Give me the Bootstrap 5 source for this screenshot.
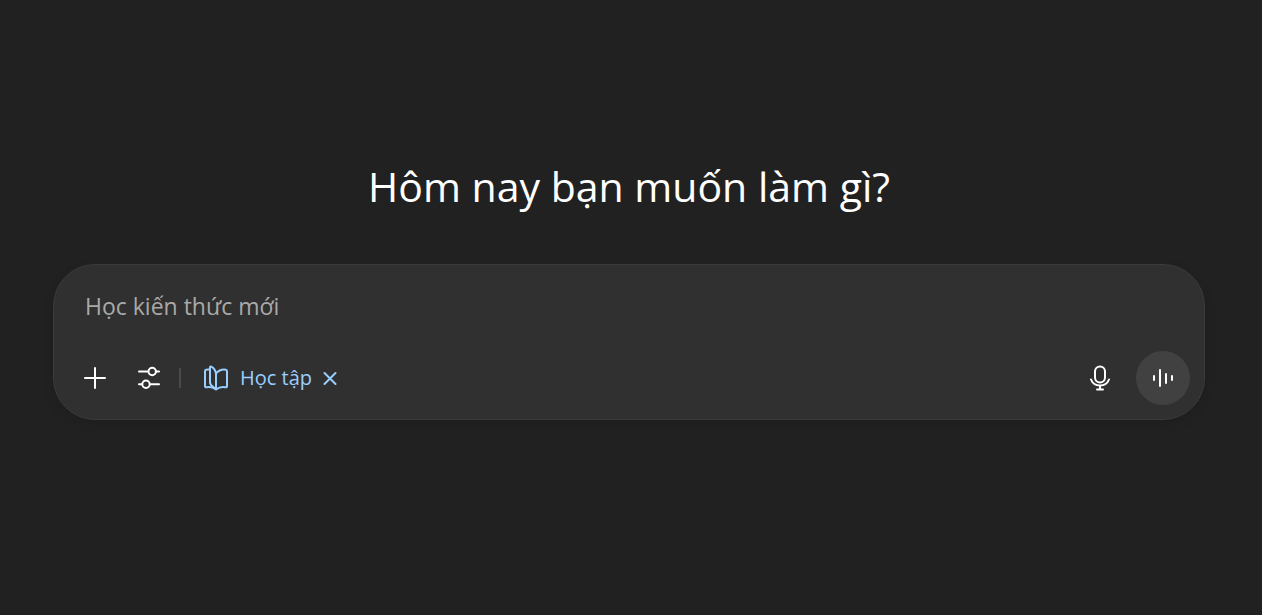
<!DOCTYPE html>
<html lang="vi">
<head>
<meta charset="utf-8">
<meta name="viewport" content="width=device-width, initial-scale=1">
<title>Hôm nay bạn muốn làm gì?</title>
<link href="https://cdn.jsdelivr.net/npm/bootstrap@5.3.0/dist/css/bootstrap.min.css" rel="stylesheet">
<style>
  body { background: #212121; color: #fff; font-family: "Open Sans", "Noto Sans", sans-serif; }
  .hero { padding: 152px 57px 32px 53px; }
  .hero-title { font-size: 41px; line-height: 68px; font-weight: 400; margin-bottom: 44px; }
  .composer { background: #303030; border: 1px solid #3b3b3b; border-radius: 42px; padding: 24px 14px 14px 23px; box-shadow: 0 4px 12px rgba(0, 0, 0, .1); }
  .prompt { font-size: 23px; line-height: 34px; height: 34px; padding: 0 8px; margin-bottom: 28px; color: #fff; background: none; }
  .prompt:focus { color: #fff; background: none; box-shadow: none; }
  .prompt::placeholder { color: #a9a9a9; opacity: 1; }
  .tool { width: 36px; height: 36px; color: #fff; }
  .tool-gap { gap: 18px; }
  .divider { width: 2px; height: 20px; background: #4a4a4a; margin: 0 18px 0 12px; }
  .study { color: #99ceff; font-size: 20px; line-height: 36px; }
  .study:hover, .tool:hover, .voice:hover { color: #fff; }
  .study-label { margin: 0 11px; }
  .voice { width: 54px; height: 54px; background: #414141; color: #fff; }
  .mic { margin-right: 18px; }
  svg { display: block; flex: none; fill: none; stroke: currentColor; stroke-width: 2; stroke-linecap: round; stroke-linejoin: round; }
</style>
</head>
<body>
<main class="hero">
  <h1 class="hero-title text-center">Hôm nay bạn muốn làm gì?</h1>
  <form class="composer">
    <input class="prompt form-control border-0" type="text" placeholder="Học kiến thức mới" aria-label="Học kiến thức mới">
    <div class="d-flex align-items-center">
      <div class="d-flex tool-gap">
        <button type="button" class="tool btn border-0 p-0 d-flex align-items-center justify-content-center" aria-label="Thêm">
          <svg width="24" height="24" viewBox="0 0 24 24"><path d="M12 2v20M2 12h20"/></svg>
        </button>
        <button type="button" class="tool btn border-0 p-0 d-flex align-items-center justify-content-center" aria-label="Công cụ">
          <svg width="24" height="24" viewBox="0 0 24 24"><path d="M2 5.500h9M19 5.500h3M2 18.200h3M13 18.200h9"/><circle cx="15.200" cy="5.500" r="3.700"/><circle cx="9" cy="18.200" r="3.700"/></svg>
        </button>
      </div>
      <div class="divider"></div>
      <button type="button" class="study btn border-0 p-0 d-flex align-items-center">
        <svg class="ms-1" width="26" height="26" viewBox="0 0 26 26"><path d="M13 8.500C12.500 5.500 11 3 8.200 1.600Q7 1.200 7 2.500V17.500C7 20.500 10 21.500 13 24.500ZM7 4.200 3.200 4.700Q2 5 2 6.200V21Q2 22.300 3.300 22.200C7 21.500 10.500 22.500 13 24.500C15.500 22.500 19 21.500 22.800 22.200Q24 22.300 24 21V6.200Q24 4.900 22.800 4.700C19.500 4.300 15.500 5.500 13 8.500"/></svg>
        <span class="study-label">Học tập</span>
        <svg width="14" height="14" viewBox="0 0 14 14"><path d="M1.500 2l11 11M12.500 2l-11 11"/></svg>
      </button>
      <button type="button" class="tool mic btn border-0 p-0 ms-auto d-flex align-items-center justify-content-center" aria-label="Đọc chính tả">
        <svg width="22" height="26" viewBox="0 0 22 26"><rect x="6" y="1.500" width="10" height="16" rx="5"/><path d="M2 14.500C3.500 18.300 7 20.500 11 20.500S18.500 18.300 20 14.500M11 21v3.500M8 24.500h6"/></svg>
      </button>
      <button type="button" class="voice btn border-0 p-0 rounded-circle d-flex align-items-center justify-content-center" aria-label="Giọng nói">
        <svg width="22" height="20" viewBox="0 0 22 20"><path d="M2 8v4M8 2v16M14 6v9M20 8v4"/></svg>
      </button>
    </div>
  </form>
</main>
<script src="https://cdn.jsdelivr.net/npm/bootstrap@5.3.0/dist/js/bootstrap.bundle.min.js"></script>
</body>
</html>
